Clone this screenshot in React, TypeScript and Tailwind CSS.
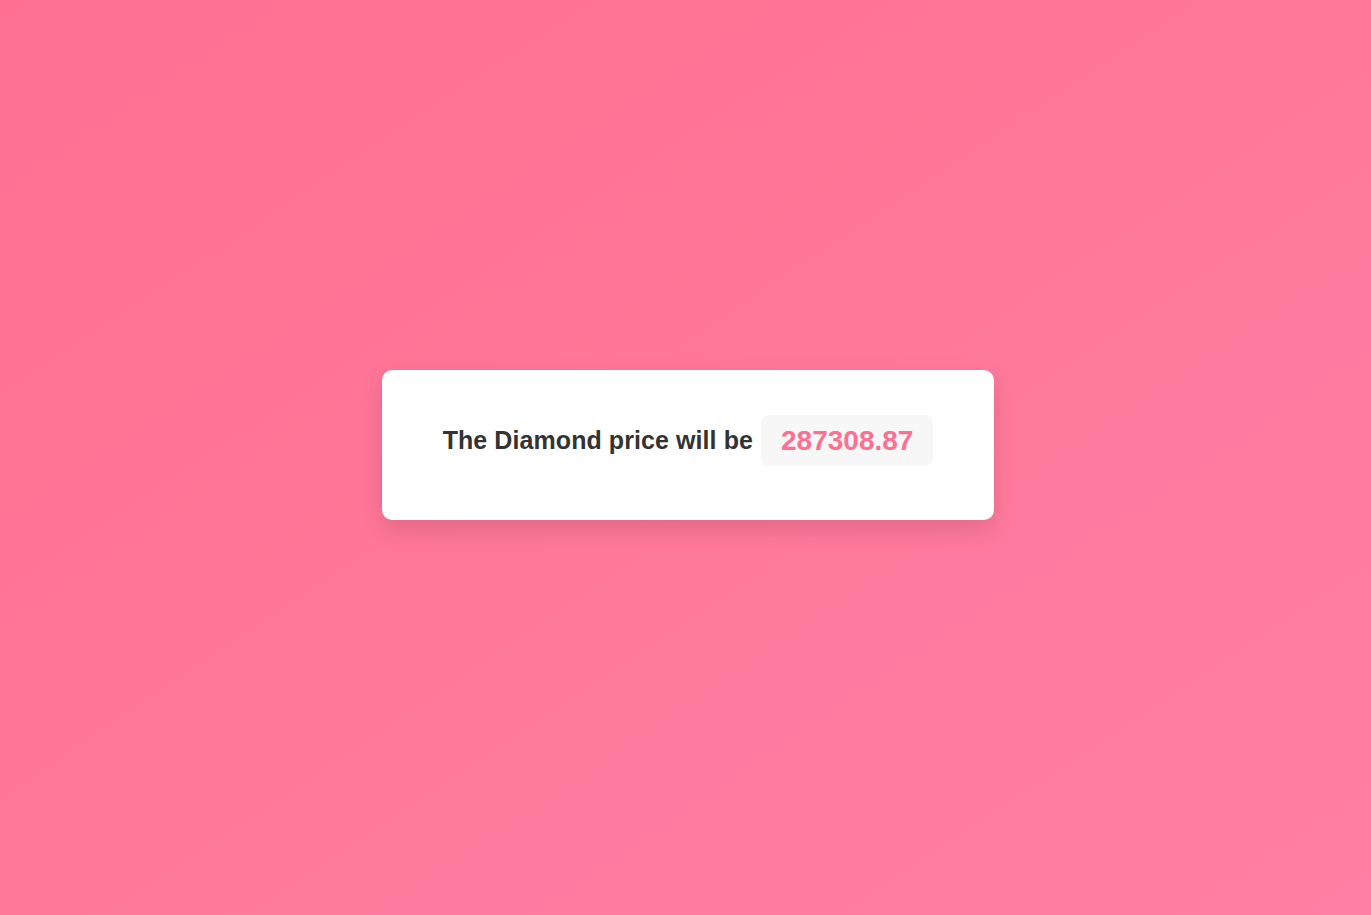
export default function App() {
  return (
    <div className="flex min-h-screen items-center justify-center bg-gradient-to-br from-[#ff6f91] to-[#ff80a2] pb-[25px] pl-[5px] font-['Liberation_Sans',Arial,sans-serif]">
      {/* result card */}
      <div className="flex w-[612px] items-center justify-center gap-2 rounded-[10px] bg-white pt-[45px] pb-[54px] shadow-[0_10px_25px_rgba(0,0,0,0.12)]">
        <span className="text-[25px] font-bold tracking-[0.08px] text-[#333333]">The Diamond price will be</span>
        <span className="rounded-lg bg-[#f7f7f7] px-5 py-[10px] text-[28px] leading-[31px] font-bold text-[#ff6f91]">
          287308.87
        </span>
      </div>
    </div>
  )
}
